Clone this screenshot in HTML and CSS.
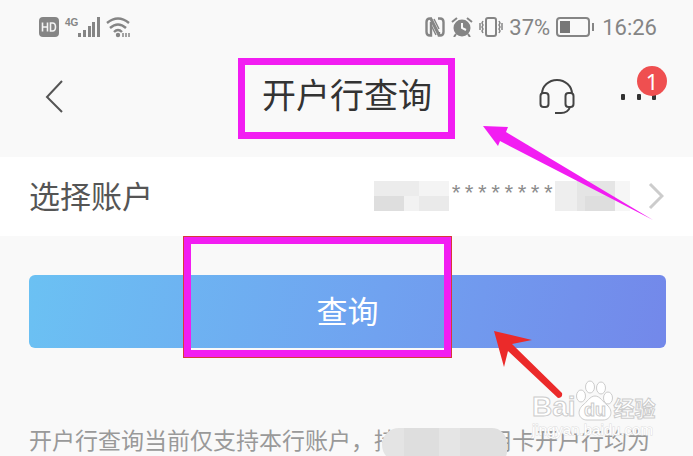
FILE: index.html
```html
<!DOCTYPE html>
<html lang="zh-Hans">
<head>
    <meta charset="UTF-8">
    <meta name="viewport" content="width=device-width, initial-scale=1">
    <title>开户行查询</title>
    <link rel="stylesheet" href="styles.css">
</head>
<body>
<div class="status-bar">
    <div class="status-left">
        <svg class="icon-hd" width="20" height="20" viewBox="0 0 20 20">
            <rect width="20" height="20" rx="4" fill="#858585"/>
            <path d="M3.5 5.5v9M8.5 5.5v9M3.5 10h5M11.5 6v8h2q3 0 3-4t-3-4z" fill="none" stroke="#f4f4f4" stroke-width="1.6"/>
        </svg>
        <span class="network">4G</span>
        <svg class="icon-signal" width="22" height="20" viewBox="0 0 22 20" fill="#858585">
            <rect x="0" y="16" width="3" height="4"/>
            <rect x="5" y="13" width="3" height="7"/>
            <rect x="10" y="9" width="3" height="11"/>
            <rect x="14" y="5" width="3" height="15"/>
            <rect x="19" y="0" width="3" height="20"/>
        </svg>
        <svg class="icon-wifi" width="25" height="21" viewBox="0 0 25 21" fill="none" stroke="#858585" stroke-width="2.4">
            <path d="M1 6q11-9 22 0M4 11q8-7 16 0M8 15q4-4 8 0"/>
            <circle cx="12" cy="18" r="1" fill="#858585"/>
            <path d="M17 16v4M20 16v4M23 16v4" stroke-width="1.5"/>
        </svg>
    </div>
    <div class="status-right">
        <svg width="20" height="20" viewBox="0 0 20 20" fill="none" stroke="#858585">
            <path d="M7 1.500H5Q1.500 1.500 1.500 5v10q0 3.500 3.500 3.500h1V5M13 1.500h2q3.500 0 3.500 3.500v10q0 3.500-3.500 3.500h-1V15" stroke-width="2.400"/>
            <path d="M6 2l8 16" stroke-width="3"/>
            <path d="M6 8l5 10M9 2l5 10" stroke-width="1.500"/>
        </svg>
        <svg width="22" height="20" viewBox="0 0 22 20" fill="none" stroke="#858585" stroke-width="2">
            <circle cx="11" cy="11" r="7.500" fill="#858585"/>
            <path d="M1 5l5-4M16 1l5 4M5 17l-2 3M17 17l2 3"/>
            <path d="M11 6v5l4 2" stroke="#f9f9f9"/>
        </svg>
        <svg width="24" height="20" viewBox="0 0 24 20" fill="none" stroke="#858585" stroke-width="2">
            <rect x="7" y="1" width="10" height="18" rx="2"/>
            <path d="M4 4l-1 2 1 2-1 2 1 2-1 2 1 2M1 6v7M20 4l1 2-1 2 1 2-1 2 1 2-1 2M23 6v7" stroke-width="1.500"/>
        </svg>
        <span>37%</span>
        <svg width="38" height="20" viewBox="0 0 38 20" fill="none" stroke="#858585" stroke-width="2">
            <rect x="1" y="1" width="32" height="18" rx="3"/>
            <rect x="4" y="4" width="10" height="12" fill="#777" stroke="none"/>
            <path d="M37 6v8"/>
        </svg>
        <span class="clock">16:26</span>
    </div>
</div>

<header class="nav-bar">
    <button class="icon-button back" type="button" aria-label="返回">
        <svg width="19" height="34" viewBox="0 0 19 34" fill="none" stroke="#555" stroke-width="2">
            <path d="M17 1L2 17l15 15"/>
        </svg>
    </button>
    <h1 class="title">开户行查询</h1>
    <div class="nav-actions">
        <button class="icon-button" type="button" aria-label="客服">
            <svg width="36" height="36" viewBox="0 0 36 36" fill="none" stroke="#444" stroke-width="2">
                <path d="M3 15a15 14 0 0 1 30 0"/>
                <rect x="1.500" y="14" width="8" height="14" rx="3"/>
                <rect x="26.500" y="14" width="8" height="14" rx="3"/>
                <path d="M31 28q-2 6-9 6h-6"/>
            </svg>
        </button>
        <button class="icon-button more" type="button" aria-label="更多">
            <svg width="36" height="6" viewBox="0 0 36 6" fill="#333">
                <rect width="4" height="6" rx="1"/>
                <rect x="16" width="4" height="6" rx="1"/>
                <rect x="31" width="4" height="6" rx="1"/>
            </svg>
            <span class="badge">1</span>
        </button>
    </div>
</header>

<main>
    <a class="account-row" href="#">
        <span>选择账户</span>
        <span class="account-number">
            <svg width="75" height="30" viewBox="0 0 75 30">
                <rect width="45" height="15" fill="#ececec"/>
                <rect x="45" width="30" height="15" fill="#f4f4f4"/>
                <rect y="15" width="30" height="15" fill="#dedede"/>
                <rect x="30" y="15" width="15" height="15" fill="#f2f2f2"/>
                <rect x="45" y="15" width="30" height="15" fill="#eaeaea"/>
            </svg>
            <span class="stars">********</span>
            <svg width="75" height="30" viewBox="0 0 75 30">
                <rect width="22" height="30" fill="#eeeeee"/>
                <rect x="22" width="38" height="30" fill="#e5e5e5"/>
                <rect x="30" y="15" width="30" height="15" fill="#dedede"/>
                <rect x="60" width="15" height="30" fill="#f6f6f6"/>
            </svg>
            <svg class="chevron" width="16" height="28" viewBox="0 0 16 28" fill="none" stroke="#ccc" stroke-width="3">
                <path d="M2 2l12 12L2 26"/>
            </svg>
        </span>
    </a>

    <div class="query">
        <button class="query-button" type="button">查询</button>
        <span class="query-frame"></span>
    </div>

    <p class="note">开户行查询当前仅支持本行账户，持<span class="mask"></span>用卡开户行均为</p>
</main>

<svg class="arrow arrow-title" width="170" height="94" viewBox="0 0 170 94">
    <path d="M0 0l25 1-2 5 147 88L17 15l-2 5z" fill="#f21df2"/>
</svg>
<svg class="arrow arrow-query" width="70" height="70" viewBox="0 0 70 70">
    <path d="M1 1l38 9-20 4 50 49q1 5-4 5L15 21l-4 16z" fill="#eb2a2a"/>
</svg>

<div class="watermark">
    <div class="watermark-logo">
        <span class="outlined">Bai</span>
        <svg class="paw" width="38" height="42" viewBox="0 0 38 42" fill="#fff" stroke="#ccc">
            <ellipse cx="5" cy="17" rx="4.500" ry="6"/>
            <ellipse cx="14" cy="8" rx="4.500" ry="6"/>
            <ellipse cx="25" cy="9" rx="4.500" ry="6"/>
            <ellipse cx="32" cy="19" rx="4.500" ry="6"/>
            <path d="M19 17c-5 0-8 6-12 9-7 6-4 15 4 15h16c8 0 11-9 4-15-4-3-7-9-12-9z"/>
            <text class="paw-text" x="19" y="37" text-anchor="middle">du</text>
        </svg>
        <span class="outlined cn">经验</span>
    </div>
    <div class="watermark-url">jingyan.baidu.com</div>
</div>
</body>
</html>
```
FILE: styles.css
```css
* {
    box-sizing: border-box;
}
body {
    position: relative;
    margin: 0;
    background-color: #f9f9f9;
    color: #444;
    font-family: "Liberation Sans", "Noto Sans CJK SC", sans-serif;
    overflow-x: hidden;
}
svg {
    display: block;
    flex: none;
}
.status-bar {
    display: flex;
    justify-content: space-between;
    align-items: center;
    height: 54px;
    padding: 0 36px 0 39px;
}
.status-left, .status-right {
    display: flex;
    align-items: center;
}
.status-right {
    gap: 6px;
    color: #858585;
    font-family: Roboto, sans-serif;
    font-size: 22px;
}
.network {
    align-self: flex-start;
    margin-left: 6px;
    color: #858585;
    font-size: 10px;
    font-weight: bold;
}
.icon-wifi {
    margin-left: 6px;
}
.clock {
    margin-left: 2px;
}
.nav-bar {
    display: grid;
    grid-template-columns: 1fr auto 1fr;
    align-items: center;
    padding: 4px 36px 18px;
}
.icon-button {
    justify-self: start;
    padding: 0 0 4px;
    border: none;
    background: none;
    cursor: pointer;
}
.back {
    padding-left: 9px;
}
.title {
    margin: 0;
    padding: 6px 16px 10px 17px;
    border: 7px solid #f21df2;
    color: #333;
    font-size: 34px;
    font-weight: normal;
    line-height: 51px;
}
.nav-actions {
    display: flex;
    justify-content: flex-end;
    align-items: center;
    gap: 46px;
}
.more {
    position: relative;
}
.badge {
    position: absolute;
    right: -10px;
    bottom: 8px;
    width: 30px;
    height: 30px;
    border-radius: 50%;
    background-color: #ef4f50;
    color: #fff;
    font-family: "Noto Sans", sans-serif;
    font-size: 22px;
    line-height: 30px;
    text-align: center;
}
.account-row {
    display: flex;
    justify-content: space-between;
    align-items: center;
    height: 79px;
    padding: 0 29px 4px;
    background-color: #fff;
    color: #555;
    font-size: 31px;
    text-decoration: none;
}
.account-number {
    display: flex;
    align-items: center;
    padding-top: 3px;
}
.stars {
    color: #8c8c8c;
    font-family: "Liberation Mono", monospace;
    font-size: 22px;
    line-height: 24px;
}
.chevron {
    margin-left: 18px;
}
.query {
    position: relative;
    padding: 39px 27px 0 29px;
}
.query-button {
    width: 100%;
    height: 73px;
    padding: 0 0 4px;
    border: none;
    border-radius: 6px;
    background: linear-gradient(100deg, #6bc1f3, #70a2f0 55%, #7388ea);
    color: #fff;
    font-family: inherit;
    font-size: 31px;
    cursor: pointer;
}
.query-frame {
    position: absolute;
    top: 1px;
    left: 50%;
    width: 267px;
    height: 120px;
    margin-left: -163px;
    border: 7px solid #f21df2;
    outline: 1px solid #d83a3a;
    pointer-events: none;
}
.note {
    margin: 78px 0 0;
    padding-left: 29px;
    color: #999;
    font-size: 23px;
    line-height: 30px;
    white-space: nowrap;
}
.mask {
    position: relative;
    display: inline-block;
    width: 92px;
    height: 23px;
    vertical-align: middle;
}
.mask::before {
    content: "";
    position: absolute;
    inset: -3px -18px -8px -15px;
    border-radius: 20px 18px 12px 20px;
    background: linear-gradient(90deg, #e4e4e4 22px, #dedede 22px, #dedede 57px, #e5e5e5 57px, #e5e5e5 78px, #e0e0e0 78px);
}
.arrow {
    position: absolute;
    pointer-events: none;
}
.arrow-title {
    top: 126px;
    right: 40px;
}
.arrow-query {
    top: 330px;
    right: 130px;
}
.watermark {
    position: absolute;
    top: 379px;
    right: 36px;
    width: 125px;
    white-space: nowrap;
}
.watermark-logo {
    display: flex;
    align-items: flex-end;
    height: 42px;
}
.outlined {
    color: #fff;
    font-size: 28px;
    font-weight: bold;
    line-height: 28px;
    -webkit-text-stroke: 1px #ccc;
}
.cn {
    font-size: 21px;
    line-height: 24px;
}
.paw-text {
    font-size: 18px;
    font-weight: bold;
}
.watermark-url {
    color: #fff;
    font-size: 15px;
    line-height: 18px;
    -webkit-text-stroke: 1px #ddd;
    paint-order: stroke;
}
```
